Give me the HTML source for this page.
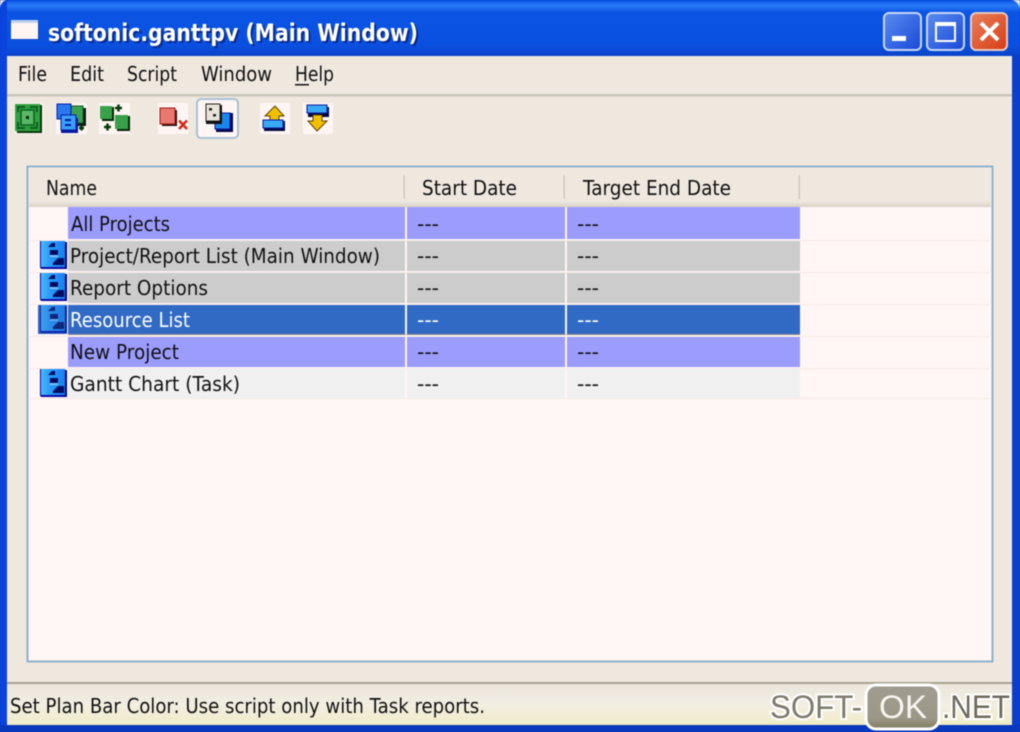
<!DOCTYPE html>
<html><head><meta charset="utf-8"><title>softonic.ganttpv</title>
<style>
html,body{margin:0;padding:0;width:1020px;height:732px;overflow:hidden;background:#0a3fd0}
svg{display:block;filter:blur(.6px)}
text{font-family:"DejaVu Sans","Liberation Sans",sans-serif;font-size:20px;fill:#101010}
</style></head><body>
<svg width="1020" height="732" viewBox="0 0 1020 732" xmlns="http://www.w3.org/2000/svg">
<defs>
<linearGradient id="tb" x1="0" y1="0" x2="0" y2="1"><stop offset="0" stop-color="#0a52e4"/><stop offset=".1" stop-color="#2a7cf8"/><stop offset=".22" stop-color="#0a54e4"/><stop offset=".8" stop-color="#0a50e0"/><stop offset="1" stop-color="#0a44c8"/></linearGradient>
<linearGradient id="st" x1="0" y1="0" x2="0" y2="1"><stop offset="0" stop-color="#ece6dc"/><stop offset=".5" stop-color="#f2eee2"/><stop offset="1" stop-color="#f0ecc8"/></linearGradient>
<linearGradient id="hd" x1="0" y1="0" x2="0" y2="1"><stop offset="0" stop-color="#efe8df"/><stop offset=".85" stop-color="#efe8df"/><stop offset="1" stop-color="#d8d2c6"/></linearGradient>
<linearGradient id="bb" x1="0" y1="0" x2="1" y2="1"><stop offset="0" stop-color="#5a8cf0"/><stop offset="1" stop-color="#1848d8"/></linearGradient>
<linearGradient id="cl" x1="0" y1="0" x2="1" y2="1"><stop offset="0" stop-color="#e8805c"/><stop offset="1" stop-color="#d83c14"/></linearGradient>
<linearGradient id="dc" x1="0" y1="0" x2="1" y2="0"><stop offset="0" stop-color="#48b8fc"/><stop offset=".35" stop-color="#2c9cf8"/><stop offset="1" stop-color="#1880f0"/></linearGradient>
<linearGradient id="ok" x1="0" y1="0" x2="0" y2="1"><stop offset="0" stop-color="#a09c90"/><stop offset=".75" stop-color="#9c9888"/><stop offset="1" stop-color="#807c60"/></linearGradient>
<g id="doc">
<path d="M0 0H2V26H26V28H2Q0 28 0 26Z" fill="#0808a8"/>
<rect x="25" y="1" width="2" height="27" fill="#000870"/>
<rect x="1" y="0" width="24" height="26" fill="url(#dc)"/>
<path d="M8 6L12 2H15V6Z" fill="#000c60"/>
<rect x="10" y="9" width="8" height="5" fill="#000c60"/>
<path d="M13 22L18 17H24V24H13Z" fill="#000c60"/>
<rect x="10" y="14" width="8" height="2" fill="#a0d8ff" opacity=".7"/>
</g>
</defs>

<!-- frame -->
<rect width="1020" height="732" fill="#0a44d8"/>
<rect x="0" y="0" width="1020" height="56" fill="url(#tb)"/>
<rect x="0" y="0" width="7" height="732" fill="#0a44dc"/>
<rect x="1012" y="56" width="8" height="676" fill="#0a3ecc"/>
<rect x="0" y="725" width="1020" height="7" fill="#0a38bc"/>
<path d="M0 0H6Q1 2 0 8Z" fill="#e8e8e0"/><path d="M1020 0H1012Q1019 2 1020 9Z" fill="#e8e8e0"/>

<!-- title -->
<rect x="11" y="21" width="28" height="19" fill="#1840a0" opacity=".5"/>
<rect x="11" y="20" width="27" height="19" fill="#fff6f4"/>
<rect x="11" y="20" width="27" height="3" fill="#c0d0f0"/>
<text x="50" y="43" textLength="370" lengthAdjust="spacingAndGlyphs" style="font-size:24px;font-weight:bold;fill:#0a2a90">softonic.ganttpv (Main Window)</text>
<text x="48" y="41" textLength="370" lengthAdjust="spacingAndGlyphs" style="font-size:24px;font-weight:bold;fill:#fff">softonic.ganttpv (Main Window)</text>

<!-- caption buttons -->
<rect x="884" y="13" width="37" height="37" rx="5" fill="url(#bb)" stroke="#c8d8f8" stroke-width="2"/>
<rect x="892" y="36" width="14" height="5" fill="#fff"/>
<rect x="927" y="13" width="37" height="37" rx="5" fill="url(#bb)" stroke="#c8d8f8" stroke-width="2"/>
<rect x="936" y="23" width="19" height="18" fill="none" stroke="#fff" stroke-width="2"/>
<rect x="936" y="22" width="19" height="4" fill="#fff"/>
<rect x="971" y="13" width="36" height="37" rx="5" fill="url(#cl)" stroke="#e8c8c0" stroke-width="2"/>
<path d="M981 23L998 40M998 23L981 40" stroke="#fff" stroke-width="4"/>

<!-- client -->
<rect x="7" y="56" width="1005" height="669" fill="#efe8df"/>
<rect x="7" y="94" width="1005" height="2.5" fill="#c8c4b8"/>

<text x="18" y="81" textLength="29" lengthAdjust="spacingAndGlyphs">File</text>
<text x="70" y="81" textLength="34" lengthAdjust="spacingAndGlyphs">Edit</text>
<text x="127" y="81" textLength="50" lengthAdjust="spacingAndGlyphs">Script</text>
<text x="201" y="81" textLength="71" lengthAdjust="spacingAndGlyphs">Window</text>
<text x="295" y="81" textLength="39" lengthAdjust="spacingAndGlyphs">Help</text>
<rect x="295" y="84" width="14" height="1.5" fill="#101010"/>

<!-- toolbar -->
<rect x="14" y="103" width="30" height="31" fill="#f8f0ec"/>
<rect x="56" y="103" width="31" height="31" fill="#fff6f4"/>
<rect x="99" y="103" width="31" height="31" fill="#fff6f4"/>
<rect x="158" y="103" width="30" height="31" fill="#fff6f4"/>
<rect x="197" y="99" width="41" height="39" rx="4" fill="#fff6f4" stroke="#a8c0d4" stroke-width="2"/>
<rect x="260" y="103" width="30" height="31" fill="#fff6f4"/>
<rect x="303" y="103" width="30" height="31" fill="#fff6f4"/>

<!-- 1 -->
<rect x="17" y="105" width="25" height="28" fill="#083808"/>
<rect x="15" y="104" width="25" height="27" fill="#30a040"/>
<path d="M18 112V107H25M30 107H37V112M37 122V128H30M25 128H18V122" fill="none" stroke="#0c6020" stroke-width="2"/>
<rect x="21" y="110" width="13" height="15" fill="#58b868" stroke="#0c6020" stroke-width="1.500"/>
<rect x="26" y="116" width="3" height="3" fill="#062806"/>
<!-- 2 -->
<rect x="72" y="108" width="14" height="18" fill="#101810"/>
<rect x="69" y="106" width="14" height="17" fill="#3ca050" stroke="#0c6020"/>
<rect x="57" y="104" width="14" height="15" fill="#2878f0" stroke="#0818a0"/>
<rect x="61" y="118" width="17" height="15" fill="#0818a0"/>
<rect x="61" y="115" width="15" height="15" fill="#38a0f8" stroke="#0818a0"/>
<rect x="65" y="119" width="6" height="2" fill="#0818a0"/><rect x="65" y="124" width="6" height="2" fill="#0818a0"/>
<path d="M79 128h5M81.500 125.500v5" stroke="#083808" stroke-width="2.500"/>
<!-- 3 -->
<rect x="102" y="107" width="12" height="14" fill="#062806"/>
<rect x="100" y="106" width="12" height="13" fill="#38a048"/>
<rect x="117" y="116" width="13" height="15" fill="#062806"/>
<rect x="115" y="115" width="13" height="14" fill="#38a048"/>
<path d="M115 108h7M118.500 104.500v7M104 127h7M107.500 123.500v7" stroke="#083808" stroke-width="2.500"/>
<!-- 4 -->
<rect x="162" y="110" width="15" height="16" fill="#301010"/>
<rect x="160" y="108" width="15" height="16" fill="#e87870" stroke="#a01810"/>
<path d="M179 120.500L187 129M187 120.500L179 129" stroke="#d02818" stroke-width="2.500"/>
<!-- 5 -->
<rect x="216" y="113" width="17" height="19" fill="#000850"/>
<rect x="215" y="113" width="15" height="16" fill="#1888ec" stroke="#0818a0"/>
<rect x="206" y="105" width="16" height="19" fill="#101010"/>
<rect x="206" y="104" width="14" height="17" fill="#e8e4dc" stroke="#202020"/>
<rect x="209" y="108" width="3" height="2.500" fill="#202020"/><rect x="213" y="114" width="3" height="2.500" fill="#202020"/>
<!-- 6 -->
<path d="M275 106L284 116H279V121H270V116H265Z" fill="#f0c000" stroke="#604000" stroke-width="1"/>
<rect x="264" y="121" width="21" height="10" fill="#000840"/>
<rect x="263" y="120" width="20" height="8" fill="#38a8f4" stroke="#0818a0"/>
<!-- 7 -->
<rect x="308" y="107" width="21" height="10" fill="#000840"/>
<rect x="307" y="105" width="20" height="8" fill="#38a8f4" stroke="#0818a0"/>
<path d="M317 131L308 121H313V115H322V121H327Z" fill="#f0c000" stroke="#604000" stroke-width="1"/>

<!-- list -->
<rect x="27.500" y="166.500" width="965" height="495" fill="#fff6f5" stroke="#8fb0cc" stroke-width="2"/>
<rect x="29" y="168" width="962" height="39" fill="url(#hd)"/>
<rect x="403.500" y="175" width="1.500" height="24" fill="#cfc9bc"/>
<rect x="563.500" y="175" width="1.500" height="24" fill="#cfc9bc"/>
<rect x="798.500" y="175" width="1.500" height="24" fill="#cfc9bc"/>
<text x="46" y="195" textLength="51" lengthAdjust="spacingAndGlyphs">Name</text>
<text x="422" y="195" textLength="95" lengthAdjust="spacingAndGlyphs">Start Date</text>
<text x="583" y="195" textLength="148" lengthAdjust="spacingAndGlyphs">Target End Date</text>

<!-- row separators -->
<g fill="#f6e9e6">
<rect x="30" y="240" width="960" height="1"/><rect x="30" y="272" width="960" height="1"/><rect x="30" y="304" width="960" height="1"/><rect x="30" y="336" width="960" height="1"/><rect x="30" y="368" width="960" height="1"/><rect x="30" y="398" width="960" height="1"/>
</g>

<!-- rows -->
<g fill="#9c9cff"><rect x="68" y="207" width="337" height="32"/><rect x="407" y="207" width="158" height="32"/><rect x="567" y="207" width="233" height="32"/></g>
<g fill="#cccccc"><rect x="68" y="241" width="337" height="30"/><rect x="407" y="241" width="158" height="30"/><rect x="567" y="241" width="233" height="30"/>
<rect x="68" y="273" width="337" height="30"/><rect x="407" y="273" width="158" height="30"/><rect x="567" y="273" width="233" height="30"/></g>
<g fill="#316ac5"><rect x="68" y="305" width="337" height="30"/><rect x="407" y="305" width="158" height="30"/><rect x="567" y="305" width="233" height="30"/></g>
<rect x="68" y="334" width="732" height="1" fill="#c8a060" opacity=".6"/>
<g fill="#9c9cff"><rect x="68" y="337" width="337" height="30"/><rect x="407" y="337" width="158" height="30"/><rect x="567" y="337" width="233" height="30"/></g>
<g fill="#f0f0f0"><rect x="68" y="369" width="337" height="29"/><rect x="407" y="369" width="158" height="29"/><rect x="567" y="369" width="233" height="29"/></g>

<use href="#doc" x="40" y="241"/>
<use href="#doc" x="40" y="273"/>
<rect x="38" y="305" width="29" height="29" fill="#316ac5"/>
<use href="#doc" x="40" y="305" opacity=".7"/>
<use href="#doc" x="40" y="369"/>

<text x="71" y="231" textLength="99" lengthAdjust="spacingAndGlyphs">All Projects</text>
<text x="70" y="263" textLength="310" lengthAdjust="spacingAndGlyphs">Project/Report List (Main Window)</text>
<text x="70" y="295" textLength="138" lengthAdjust="spacingAndGlyphs">Report Options</text>
<text x="70" y="327" textLength="120" lengthAdjust="spacingAndGlyphs" style="fill:#fff">Resource List</text>
<text x="70" y="359" textLength="109" lengthAdjust="spacingAndGlyphs">New Project</text>
<text x="70" y="391" textLength="170" lengthAdjust="spacingAndGlyphs">Gantt Chart (Task)</text>

<g>
<text x="417" y="231" textLength="22" lengthAdjust="spacingAndGlyphs">---</text><text x="577" y="231" textLength="22" lengthAdjust="spacingAndGlyphs">---</text>
<text x="417" y="263" textLength="22" lengthAdjust="spacingAndGlyphs">---</text><text x="577" y="263" textLength="22" lengthAdjust="spacingAndGlyphs">---</text>
<text x="417" y="295" textLength="22" lengthAdjust="spacingAndGlyphs">---</text><text x="577" y="295" textLength="22" lengthAdjust="spacingAndGlyphs">---</text>
<text x="417" y="327" textLength="22" lengthAdjust="spacingAndGlyphs" style="fill:#fff">---</text><text x="577" y="327" textLength="22" lengthAdjust="spacingAndGlyphs" style="fill:#fff">---</text>
<text x="417" y="359" textLength="22" lengthAdjust="spacingAndGlyphs">---</text><text x="577" y="359" textLength="22" lengthAdjust="spacingAndGlyphs">---</text>
<text x="417" y="391" textLength="22" lengthAdjust="spacingAndGlyphs">---</text><text x="577" y="391" textLength="22" lengthAdjust="spacingAndGlyphs">---</text>
</g>

<!-- status -->
<rect x="7" y="682" width="1005" height="2" fill="#a8a290"/>
<rect x="7" y="684" width="1005" height="41" fill="url(#st)"/>
<text x="10" y="713" textLength="475" lengthAdjust="spacingAndGlyphs">Set Plan Bar Color: Use script only with Task reports.</text>

<!-- watermark -->
<text x="770" y="718" textLength="92" lengthAdjust="spacingAndGlyphs" style="font-family:'Liberation Sans',sans-serif;font-size:32px;fill:#7e7a6c;stroke:#fff;stroke-width:4px;paint-order:stroke">SOFT-</text>
<rect x="866" y="685" width="73" height="44" rx="10" fill="url(#ok)" stroke="#fff" stroke-width="3"/>
<text x="879" y="718" textLength="48" lengthAdjust="spacingAndGlyphs" style="font-family:'Liberation Sans',sans-serif;font-size:32px;fill:#f8f6f0">OK</text>
<text x="942" y="718" textLength="68" lengthAdjust="spacingAndGlyphs" style="font-family:'Liberation Sans',sans-serif;font-size:32px;fill:#6e6a5c;stroke:#fff;stroke-width:4px;paint-order:stroke">.NET</text>
</svg>
</body></html>
